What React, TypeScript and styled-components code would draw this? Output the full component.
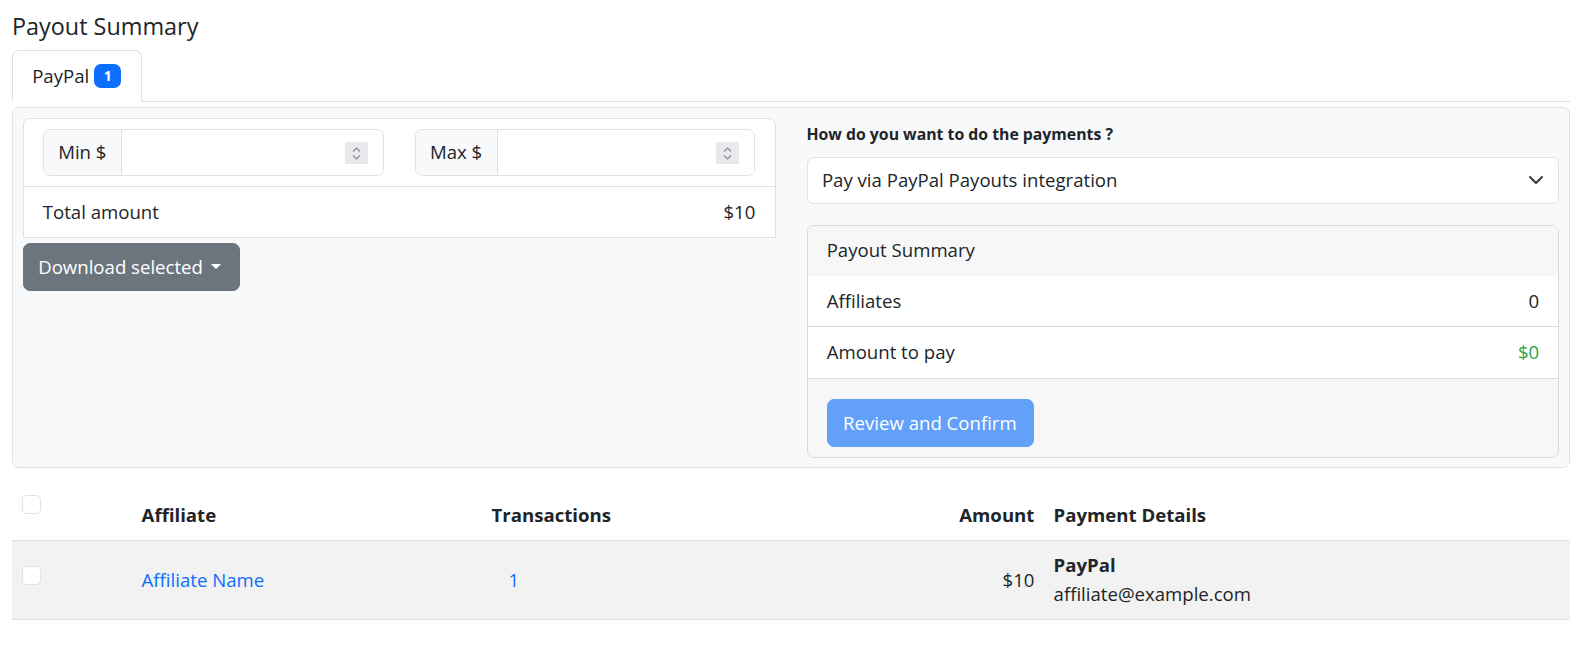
import { createGlobalStyle, styled } from 'styled-components';

const GlobalStyle = createGlobalStyle`
  body {
    margin: 0;
    background: #fff;
    color: #212529;
    font-family: "Open Sans", "Noto Sans", sans-serif;
    font-size: 18.6px;
    line-height: 28.8px;
  }
  * { box-sizing: border-box; }
`;

const Page = styled.div`
  padding: 12px 11px 24px 12px;
`;

const Title = styled.h5`
  margin: 0 0 9.6px;
  font-size: 23.4px;
  font-weight: 400;
  line-height: 28.8px;
`;

const TabBar = styled.div`
  display: flex;
  border-bottom: 1px solid #dee2e6;
  margin-bottom: 5px;
`;

const Tab = styled.div`
  display: flex;
  align-items: center;
  gap: 5px;
  padding: 10.6px 19.2px;
  margin-bottom: -1px;
  background: #fff;
  border: 1px solid #dee2e6;
  border-bottom-color: #fff;
  border-radius: 7px 7px 0 0;
`;

const Badge = styled.span`
  background: #0d6efd;
  color: #fff;
  font-size: 14px;
  font-weight: 700;
  line-height: 1;
  padding: 5px 9.6px;
  border-radius: 7px;
`;

const Panel = styled.div`
  display: grid;
  grid-template-columns: 1fr 1fr;
  column-gap: 31px;
  align-items: start;
  padding: 10px 9.6px 9.6px;
  background: #f8f9fa;
  border: 1px solid #dee2e6;
  border-radius: 7px;
`;

const Column = styled.div`
  display: flex;
  flex-direction: column;
  align-items: stretch;
`;

const FilterCard = styled.div`
  background: #fff;
  border: 1px solid #dee2e6;
  border-radius: 7px 7px 0 0;
`;

const FilterRow = styled.div`
  display: grid;
  grid-template-columns: 1fr 1fr;
  column-gap: 31px;
  padding: 10px 19.2px;
  border-bottom: 1px solid #dee2e6;
`;

const InputGroup = styled.div`
  display: flex;
  height: 47px;
  border: 1px solid #dee2e6;
  border-radius: 7px;
  overflow: hidden;
`;

const GroupLabel = styled.span`
  display: flex;
  align-items: center;
  padding: 0 14.4px;
  background: #f8f9fa;
  border-right: 1px solid #dee2e6;
  white-space: nowrap;
`;

const Field = styled.div`
  flex: 1;
  min-width: 0;
  display: flex;
  align-items: center;
  padding: 0 15px 0 14.4px;
  background: #fff;
`;

const FieldInput = styled.input`
  flex: 1;
  width: 100%;
  min-width: 0;
  border: none;
  outline: none;
  background: transparent;
  font: inherit;
  color: inherit;
  padding: 0;
`;

const Spinner = styled.span`
  display: flex;
  flex-shrink: 0;
  width: 23px;
  height: 22px;
  background: #e9e9ed;
`;

const LineItem = styled.div`
  display: flex;
  justify-content: space-between;
  padding: 10.4px 19.2px;
  background: #fff;
`;

const DropButton = styled.button`
  align-self: flex-start;
  display: flex;
  align-items: center;
  margin-top: 5px;
  padding: 8.6px 18px 8.6px 14.6px;
  font: inherit;
  color: #fff;
  background: #6c757d;
  border: 1px solid #6c757d;
  border-radius: 7px;
`;

const Caret = styled.span`
  display: inline-block;
  margin-left: 8px;
  border-top: 5.6px solid #fff;
  border-left: 5.2px solid transparent;
  border-right: 5.2px solid transparent;
`;

const Question = styled.label`
  display: block;
  margin: 4px 0 9.6px;
  font-size: 15.8px;
  font-weight: 700;
  line-height: 25px;
`;

const SelectBox = styled.div`
  display: flex;
  align-items: center;
  justify-content: space-between;
  height: 47px;
  padding: 0 14.4px;
  background: #fff;
  border: 1px solid #dee2e6;
  border-radius: 7px;
`;

const SummaryCard = styled.div`
  margin-top: 21px;
  background: #fff;
  border: 1px solid #d9d9d9;
  border-radius: 7px;
  overflow: hidden;
`;

const CardHeader = styled.div`
  padding: 10.4px 19.2px;
  background: #f7f7f7;
`;

const SummaryItem = styled.div`
  display: flex;
  justify-content: space-between;
  padding: 11px 19.2px;
  border-bottom: 1px solid #dcdcdc;
`;

const Value = styled.span<{ $tone?: string }>`
  color: ${(p) => p.$tone || '#212529'};
`;

const CardFooter = styled.div`
  padding: 20px 19.2px 9.6px;
  background: #f7f7f7;
`;

const ConfirmButton = styled.button`
  padding: 8.6px 16.4px 8.6px 15.4px;
  font: inherit;
  color: #fff;
  background: #62a0fa;
  border: 1px solid #62a0fa;
  border-radius: 7px;
`;

const Table = styled.table`
  width: 100%;
  margin-top: 17px;
  border-collapse: collapse;
  table-layout: fixed;
`;

const HeadCell = styled.th<{ $right?: boolean }>`
  padding: 9.6px;
  text-align: ${(p) => (p.$right ? 'right' : 'left')};
  vertical-align: bottom;
  font-weight: 700;
  border-bottom: 1px solid #dee2e6;
`;

const CheckHeadCell = styled(HeadCell)`
  vertical-align: top;
`;

const BodyRow = styled.tr`
  background: #f2f2f2;
`;

const Cell = styled.td<{ $right?: boolean }>`
  padding: 10.7px 9.6px;
  text-align: ${(p) => (p.$right ? 'right' : 'left')};
  vertical-align: middle;
  border-bottom: 1px solid #dee2e6;
`;

const CheckWrap = styled.div<{ $tall?: boolean }>`
  height: ${(p) => (p.$tall ? '35px' : '28.8px')};
`;

const Check = styled.span`
  display: block;
  width: 19.2px;
  height: 19.2px;
  background: #fff;
  border: 1px solid #dee2e6;
  border-radius: 4.8px;
`;

const Link = styled.a<{ $indent?: boolean }>`
  color: #0d6efd;
  text-decoration: none;
  padding-left: ${(p) => (p.$indent ? '17px' : '0')};
`;

const Strong = styled.div`
  font-weight: 700;
`;

const SpinIcon = () => (
  <svg width="23" height="22" viewBox="0 0 23 22" fill="none" stroke="#8a8a8a" strokeWidth="1.2">
    <path d="M8 9.5 L11.5 6 L15 9.5" />
    <path d="M8 13.5 L11.5 17 L15 13.5" />
  </svg>
);

const Chevron = () => (
  <svg width="16" height="16" viewBox="0 0 16 16" fill="none" stroke="#343a40" strokeWidth="2" strokeLinecap="round" strokeLinejoin="round">
    <path d="M2 5l6 6 6-6" />
  </svg>
);

type RangeProps = { label: string };

const RangeInput = ({ label }: RangeProps) => (
  <InputGroup>
    <GroupLabel>{label}</GroupLabel>
    <Field>
      <FieldInput type="text" aria-label={label} />
      <Spinner><SpinIcon /></Spinner>
    </Field>
  </InputGroup>
);

export default function App() {
  return (
    <Page>
      <GlobalStyle />
      <Title>Payout Summary</Title>
      <TabBar>
        <Tab>
          PayPal <Badge>1</Badge>
        </Tab>
      </TabBar>

      <Panel>
        <Column>
          <FilterCard>
            <FilterRow>
              <RangeInput label="Min $" />
              <RangeInput label="Max $" />
            </FilterRow>
            <LineItem>
              <span>Total amount</span>
              <span>$10</span>
            </LineItem>
          </FilterCard>
          <DropButton>
            Download selected <Caret />
          </DropButton>
        </Column>

        <Column>
          <Question>How do you want to do the payments ?</Question>
          <SelectBox>
            <span>Pay via PayPal Payouts integration</span>
            <Chevron />
          </SelectBox>
          <SummaryCard>
            <CardHeader>Payout Summary</CardHeader>
            <SummaryItem>
              <span>Affiliates</span>
              <Value>0</Value>
            </SummaryItem>
            <SummaryItem>
              <span>Amount to pay</span>
              <Value $tone="#28a745">$0</Value>
            </SummaryItem>
            <CardFooter>
              <ConfirmButton>Review and Confirm</ConfirmButton>
            </CardFooter>
          </SummaryCard>
        </Column>
      </Panel>

      <Table>
        <colgroup>
          <col style={{ width: 120 }} />
          <col style={{ width: 350 }} />
          <col style={{ width: 280 }} />
          <col style={{ width: 282 }} />
          <col />
        </colgroup>
        <thead>
          <tr>
            <CheckHeadCell>
              <CheckWrap $tall><Check /></CheckWrap>
            </CheckHeadCell>
            <HeadCell>Affiliate</HeadCell>
            <HeadCell>Transactions</HeadCell>
            <HeadCell $right>Amount</HeadCell>
            <HeadCell>Payment Details</HeadCell>
          </tr>
        </thead>
        <tbody>
          <BodyRow>
            <Cell>
              <CheckWrap><Check /></CheckWrap>
            </Cell>
            <Cell><Link href="#">Affiliate Name</Link></Cell>
            <Cell><Link href="#" $indent>1</Link></Cell>
            <Cell $right>$10</Cell>
            <Cell>
              <Strong>PayPal</Strong>
              <div>affiliate@example.com</div>
            </Cell>
          </BodyRow>
        </tbody>
      </Table>
    </Page>
  );
}
